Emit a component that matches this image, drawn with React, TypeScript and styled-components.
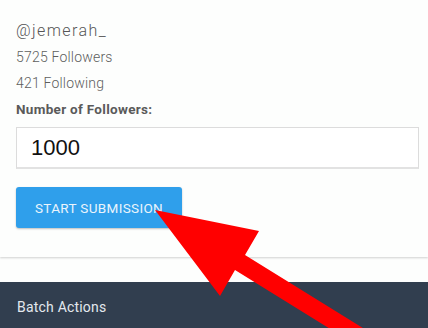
import styled, { createGlobalStyle } from 'styled-components'

const GlobalStyle = createGlobalStyle`
	html, body {
		margin: 0;
		padding: 0;
		background: #fdfefd;
		overflow: hidden;
	}
	body {
		font-family: Roboto, 'Open Sans', sans-serif;
	}
`

const profile = {
	handle: '@jemerah_',
	followers: 5725,
	following: 421,
}

function App() {
	return (
		<Page>
			<GlobalStyle />
			<Card>
				<Handle>{profile.handle}</Handle>
				<Stat>{profile.followers} Followers</Stat>
				<Stat>{profile.following} Following</Stat>
				<Label htmlFor="followers">Number of Followers:</Label>
				<Input id="followers" defaultValue="1000" />
				<Button type="button">START SUBMISSION</Button>
			</Card>
			<Panel>
				<PanelTitle>Batch Actions</PanelTitle>
			</Panel>
			<Arrow viewBox="0 0 428 328" aria-hidden="true">
				<polygon
					points="155,210 259,231 245,255 400,351 390,366 235,270 220,296"
					fill="#ff0000"
				/>
			</Arrow>
		</Page>
	)
}
export default App

const Page = styled.div`
	position: relative;
	width: 428px;
	height: 328px;
	overflow: hidden;
	background: #fdfefd;
`
const Card = styled.div`
	display: flex;
	flex-direction: column;
	align-items: flex-start;
	padding: 18px 9px 29px 16px;
	background: #fdfefd;
	box-shadow: 0 1px 2px rgba(0, 0, 0, 0.18);
`
const Handle = styled.div`
	font-size: 16px;
	line-height: 26px;
	font-weight: 300;
	color: #555;
	letter-spacing: 1.4px;
`
const Stat = styled.div`
	font-size: 14px;
	line-height: 26px;
	font-weight: 300;
	color: #5e5e5e;
	letter-spacing: 0.2px;
`
const Label = styled.label`
	font-size: 13.5px;
	line-height: 26px;
	font-weight: 700;
	color: #5a5a5a;
	letter-spacing: 0.3px;
`
const Input = styled.input`
	box-sizing: border-box;
	width: 403px;
	height: 42px;
	margin-top: 5px;
	padding: 0 14px;
	border: 1px solid #dcdcdc;
	border-bottom: 2px solid #e2e2e2;
	background: #fff;
	font-family: 'Liberation Sans', Arial, sans-serif;
	font-size: 22px;
	color: #111;
	outline: none;
`
const Button = styled.button`
	box-sizing: border-box;
	width: 166px;
	height: 41px;
	margin-top: 18px;
	border: none;
	border-radius: 3px;
	background: #2f9feb;
	box-shadow: 0 1px 2px rgba(0, 0, 0, 0.25);
	color: #eaf4fc;
	font-family: Roboto, sans-serif;
	font-size: 13.5px;
	font-weight: 400;
	letter-spacing: 0.35px;
	cursor: pointer;
`
const Panel = styled.div`
	margin-top: 25px;
	height: 60px;
	padding: 0 17px;
	background: #313e4f;
`
const PanelTitle = styled.h4`
	margin: 0;
	height: 50px;
	display: flex;
	align-items: center;
	font-size: 14px;
	font-weight: 400;
	color: #e3e8ee;
	letter-spacing: 0.2px;
`
const Arrow = styled.svg`
	position: absolute;
	left: 0;
	top: 0;
	width: 428px;
	height: 328px;
	pointer-events: none;
`
